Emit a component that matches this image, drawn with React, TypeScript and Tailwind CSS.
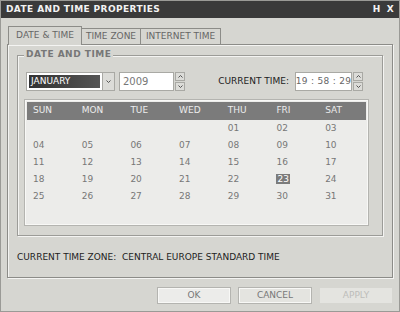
const font = { fontFamily: '"DejaVu Sans", Verdana, sans-serif' };

const weeks = [
  ["", "", "", "", "01", "02", "03"],
  ["04", "05", "06", "07", "08", "09", "10"],
  ["11", "12", "13", "14", "15", "16", "17"],
  ["18", "19", "20", "21", "22", "23", "24"],
  ["25", "26", "27", "28", "29", "30", "31"],
];
const days = ["SUN", "MON", "TUE", "WED", "THU", "FRI", "SAT"];

function Chevron({ up }: { up?: boolean }) {
  return (
    <svg width="5" height="3" viewBox="0 0 5 3" className="block">
      <path
        d={up ? "M0.5 2.5 L2.5 0.5 L4.5 2.5" : "M0.5 0.5 L2.5 2.5 L4.5 0.5"}
        fill="none"
        stroke="#555"
        strokeWidth="1"
      />
    </svg>
  );
}

function Spinner() {
  return (
    <div className="flex flex-col w-[10px] h-[19px] gap-[1px]">
      <div className="flex-1 flex items-center justify-center border border-[#a9a9a4] bg-[#dcdcd8]">
        <Chevron up />
      </div>
      <div className="flex-1 flex items-center justify-center border border-[#a9a9a4] bg-[#dcdcd8]">
        <Chevron />
      </div>
    </div>
  );
}

export default function App() {
  return (
    <div
      className="w-[400px] h-[312px] bg-[#d6d6d1] border border-[#9a9a96] flex flex-col text-[9px] uppercase whitespace-nowrap"
      style={font}
    >
      {/* title bar */}
      <div className="h-[17px] bg-[#3a3a3a] flex items-center justify-between pl-[5px] pr-[5px] text-[#f2f2f2] font-bold text-[9px] tracking-[0.4px]">
        <span>Date and Time Properties</span>
        <span className="flex gap-[6px]">
          <span>H</span>
          <span>X</span>
        </span>
      </div>

      <div className="px-[6px] pt-[8px]">
        {/* tabs */}
        <div className="flex items-end h-[18px] pl-[1px]">
          <div className="h-[19px] w-[74px] -mb-[1px] bg-[#d6d6d1] border border-b-0 border-[#8c8c88] flex items-center justify-center text-[#666] z-10">
            Date &amp; Time
          </div>
          <div className="h-[16px] w-[59px] border border-b-0 border-l-0 border-[#8c8c88] flex items-center justify-center text-[#666]">
            Time Zone
          </div>
          <div className="h-[16px] w-[80px] border border-b-0 border-l-0 border-[#8c8c88] flex items-center justify-center text-[#666]">
            Internet Time
          </div>
        </div>

        {/* panel */}
        <div className="h-[234px] border border-[#8c8c88] shadow-[inset_1px_1px_0_#f4f4f2,1px_1px_0_#f4f4f2] px-[9px] pt-[10px]">
          {/* group */}
          <div className="relative h-[181px] border border-[#9c9c98] shadow-[inset_1px_1px_0_#f4f4f2,1px_1px_0_#f4f4f2] px-[8px] pt-[16px]">
            <span className="absolute -top-[6px] left-[6px] px-[2px] bg-[#d6d6d1] font-bold text-[#777] text-[9px] leading-none tracking-[0.5px]">
              Date and Time
            </span>

            <div className="flex items-center h-[19px]">
              <div className="flex">
                <div className="w-[77px] h-[19px] border border-[#a9a9a4] bg-white p-[2px]">
                  <div className="h-full bg-gradient-to-r from-[#333] to-[#555] text-white flex items-center pl-[2px]">
                    January
                  </div>
                </div>
                <div className="w-[12px] h-[19px] border border-l-0 border-[#a9a9a4] bg-[#dcdcd8] flex items-center justify-center">
                  <Chevron />
                </div>
              </div>

              <div className="flex ml-[4px] gap-[1px]">
                <div className="w-[55px] h-[19px] border border-[#a9a9a4] bg-white flex items-center pl-[3px] text-[#777] text-[10px]">
                  2009
                </div>
                <Spinner />
              </div>

              <span className="ml-auto text-[#222]">Current Time:</span>
              <div className="flex ml-[6px] gap-[1px] mr-[11px]">
                <div className="w-[57px] h-[19px] border border-[#a9a9a4] bg-white flex items-center justify-center text-[#666] text-[9px] tracking-[0.3px]">
                  19 : 58 : 29
                </div>
                <Spinner />
              </div>
            </div>

            {/* calendar */}
            <div className="mt-[9px] -ml-[1px] w-[343px] h-[125px] border border-[#f8f8f6] shadow-[0_0_0_1px_#b4b4b0] p-[1px] bg-[#ececea]">
              <div className="grid grid-cols-[repeat(6,48.7px)_1fr] h-[18px] bg-[#7b7b7b] text-[#ececec] items-center pl-[6px]">
                {days.map((d) => (
                  <span key={d}>{d}</span>
                ))}
              </div>
              {weeks.map((w, i) => (
                <div
                  key={i}
                  className="grid grid-cols-[repeat(6,48.7px)_1fr] h-[17px] items-center pl-[6px] text-[#777]"
                >
                  {w.map((d, j) => (
                    <span key={j}>
                      {d === "23" ? (
                        <span className="bg-[#7b7b7b] text-white px-[1px]">{d}</span>
                      ) : (
                        d
                      )}
                    </span>
                  ))}
                </div>
              ))}
            </div>
          </div>

          <div className="mt-[15px] text-[#222]">Current Time Zone:&nbsp; Central Europe Standard Time</div>
        </div>

        {/* buttons */}
        <div className="flex justify-end gap-[9px] mt-[10px] pr-[1px]">
          <div className="w-[72px] h-[15px] border border-[#f8f8f6] shadow-[0_0_0_1px_#b4b4b0] bg-[#ececea] flex items-center justify-center text-[#777]">
            OK
          </div>
          <div className="w-[72px] h-[15px] border border-[#f8f8f6] shadow-[0_0_0_1px_#b4b4b0] bg-[#e4e4e0] flex items-center justify-center text-[#777]">
            Cancel
          </div>
          <div className="w-[72px] h-[15px] bg-[#e4e4e0] flex items-center justify-center text-[#bdbdba]">
            Apply
          </div>
        </div>
      </div>
    </div>
  );
}
